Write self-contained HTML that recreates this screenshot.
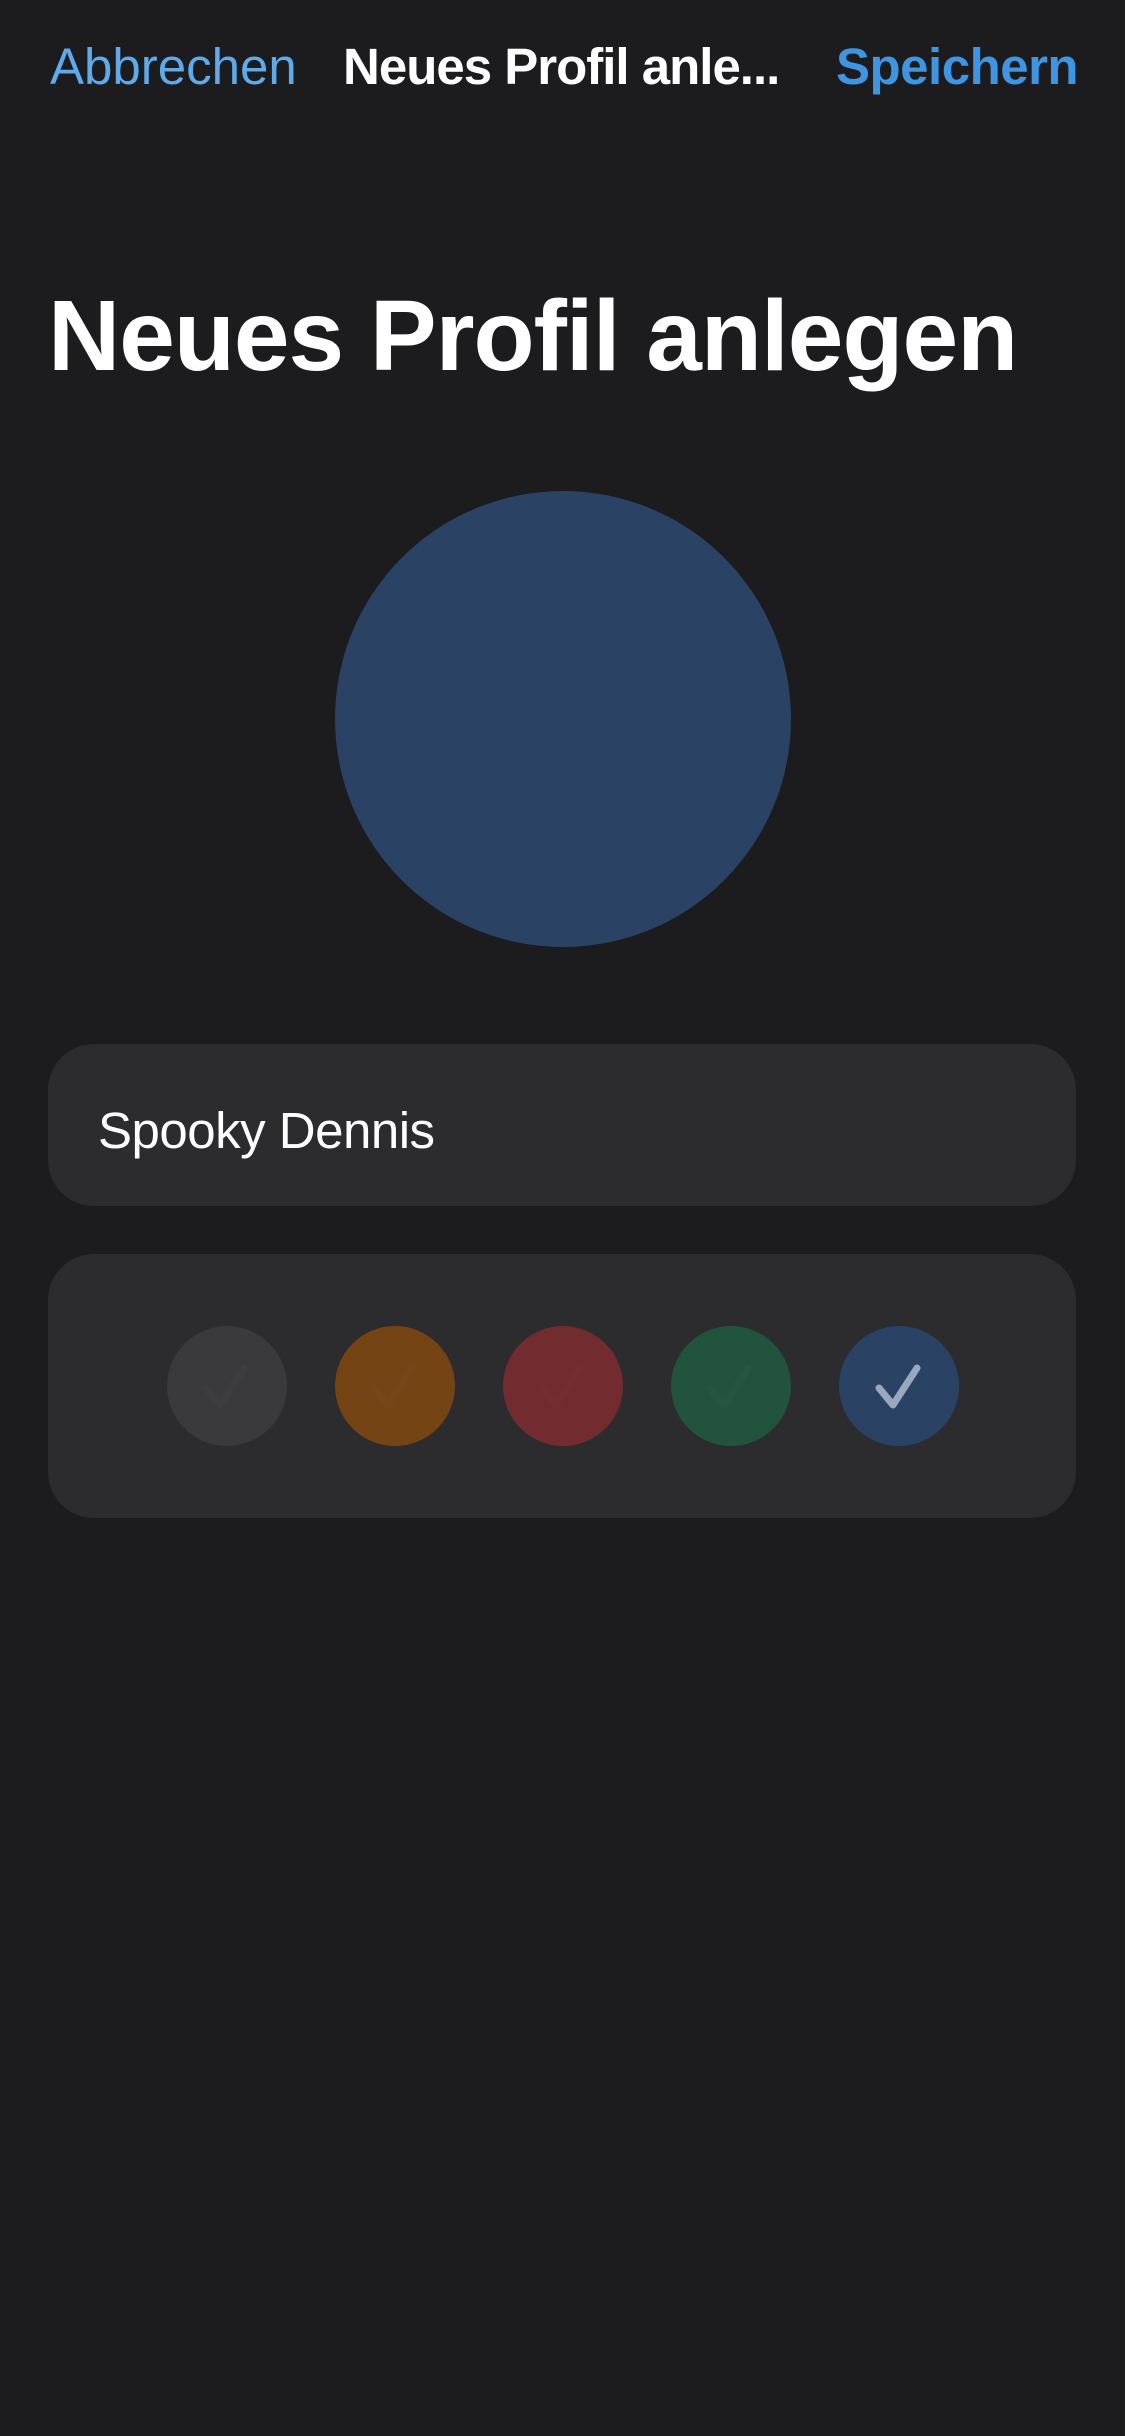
<!DOCTYPE html>
<html><head><meta charset="utf-8">
<style>
html,body{margin:0;padding:0;}
body{width:1125px;height:2436px;background:#1c1c1e;position:relative;overflow:hidden;font-family:"Liberation Sans",sans-serif;}
.t{position:absolute;white-space:nowrap;line-height:1;}
</style></head><body>
<div class="t" style="left:50px;top:41px;font-size:51px;color:#5eaaea;letter-spacing:0px;">Abbrechen</div>
<div class="t" style="left:343px;top:41px;font-size:51px;color:#fff;font-weight:600;letter-spacing:-1px;">Neues Profil anle...</div>
<div class="t" style="left:836px;top:41px;font-size:51px;color:#3e95e2;font-weight:bold;letter-spacing:-0.5px;">Speichern</div>
<div class="t" style="left:48px;top:286px;font-size:100px;color:#fff;font-weight:bold;letter-spacing:-1px;">Neues Profil anlegen</div>
<div style="position:absolute;left:335px;top:491px;width:456px;height:456px;border-radius:50%;background:#2a4365;"></div>
<div style="position:absolute;left:48px;top:1044px;width:1028px;height:162px;border-radius:46px;background:#2c2c2e;"></div>
<div class="t" style="left:98px;top:1105px;font-size:51px;color:#fff;letter-spacing:-0.5px;">Spooky Dennis</div>
<div style="position:absolute;left:48px;top:1254px;width:1028px;height:264px;border-radius:46px;background:#2c2c2e;"></div>
<svg style="position:absolute;left:0;top:0" width="1125" height="2436">
<g stroke-linecap="round" stroke-linejoin="round" fill="none" stroke-width="7">
<circle cx="227" cy="1386" r="60" fill="#3a3a3c" stroke="none"/>
<path d="M206 1388 L220 1405 L244 1368" stroke="#3d3d3f"/>
<circle cx="395" cy="1386" r="60" fill="#744414" stroke="none"/>
<path d="M374 1388 L388 1405 L412 1368" stroke="#764618"/>
<circle cx="563" cy="1386" r="60" fill="#722b2e" stroke="none"/>
<path d="M542 1388 L556 1405 L580 1368" stroke="#742e31"/>
<circle cx="731" cy="1386" r="60" fill="#22533d" stroke="none"/>
<path d="M710 1388 L724 1405 L748 1368" stroke="#245640"/>
<circle cx="899" cy="1386" r="60" fill="#2a4365" stroke="none"/>
<path d="M879 1388 L893 1405 L917 1368" stroke="#9ba7be"/>
</g></svg>
</body></html>
